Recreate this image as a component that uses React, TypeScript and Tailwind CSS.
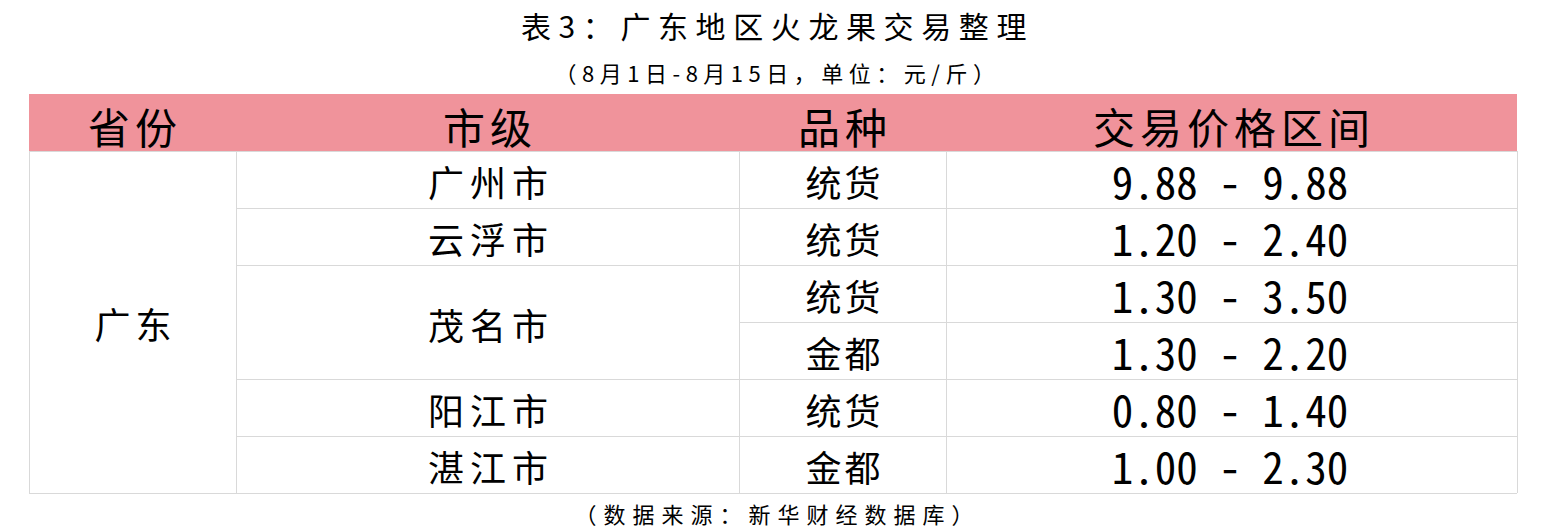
import React from "react";

const cjk = { fontFamily: '"Noto Sans CJK SC", sans-serif' };
const mono = { fontFamily: '"Noto Sans Mono CJK SC", "Noto Sans CJK SC", "Liberation Mono", monospace' };

type Row = { city?: string; citySpan?: number; kind: string; price: string };

const rows: Row[] = [
  { city: "广州市", kind: "统货", price: "9.88 - 9.88" },
  { city: "云浮市", kind: "统货", price: "1.20 - 2.40" },
  { city: "茂名市", citySpan: 2, kind: "统货", price: "1.30 - 3.50" },
  { kind: "金都", price: "1.30 - 2.20" },
  { city: "阳江市", kind: "统货", price: "0.80 - 1.40" },
  { city: "湛江市", kind: "金都", price: "1.00 - 2.30" },
];

export default function App() {
  const cell = "border-t border-r border-[#d9d9d9] flex items-center justify-center";
  return (
    <div className="w-[1549px] h-[532px] bg-white text-black" style={cjk}>
      <div className="h-[49px] flex items-center justify-center pl-[6px]">
        <span className="text-[30px] tracking-[7.6px] leading-none">表3：广东地区火龙果交易整理</span>
      </div>
      <div className="h-[45px] flex items-center justify-center pl-[6px]">
        <span className="text-[22px] tracking-[5.5px] leading-none">（8月1日-8月15日，单位：元/斤）</span>
      </div>
      <div className="ml-[29px] w-[1488px]">
        <div className="h-[57px] bg-[#f0939b] grid grid-cols-[207px_503px_207px_571px] text-[42px] leading-none">
          <div className="flex items-center justify-center pt-[6px] pl-[5px] tracking-[5px]">省份</div>
          <div className="flex items-center justify-center pt-[6px] pl-[5px] tracking-[5px]">市级</div>
          <div className="flex items-center justify-center pt-[6px] pl-[5px] tracking-[5px]">品种</div>
          <div className="flex items-center justify-center pt-[6px] pl-[5px] tracking-[5px]">交易价格区间</div>
        </div>
        <div className="grid grid-cols-[207px_503px_207px_571px] grid-rows-[repeat(6,57px)] border-l border-b border-[#d9d9d9] text-[36px] leading-none">
          <div className={`${cell} row-span-6 col-start-1 row-start-1 tracking-[5px] pl-[5px]`}>广东</div>
          {rows.map((r, i) => (
            <React.Fragment key={i}>
              {r.city && (
                <div
                  className={`${cell} col-start-2 tracking-[6px] pl-[6px] pt-[2px] ${r.citySpan === 2 ? "row-span-2" : ""}`}
                  style={{ gridRowStart: i + 1 }}
                >
                  {r.city}
                </div>
              )}
              <div className={`${cell} col-start-3 tracking-[3px] pl-[3px] pt-[2px]`} style={{ gridRowStart: i + 1 }}>
                {r.kind}
              </div>
              <div className={`${cell} col-start-4 pr-[4px]`} style={{ gridRowStart: i + 1 }}>
                <span className="text-[43px] whitespace-pre" style={mono}>{r.price}</span>
              </div>
            </React.Fragment>
          ))}
        </div>
      </div>
      <div className="h-[38px] flex items-center justify-center pl-[6px]">
        <span className="text-[22px] tracking-[7px] leading-none">（数据来源：新华财经数据库）</span>
      </div>
    </div>
  );
}
